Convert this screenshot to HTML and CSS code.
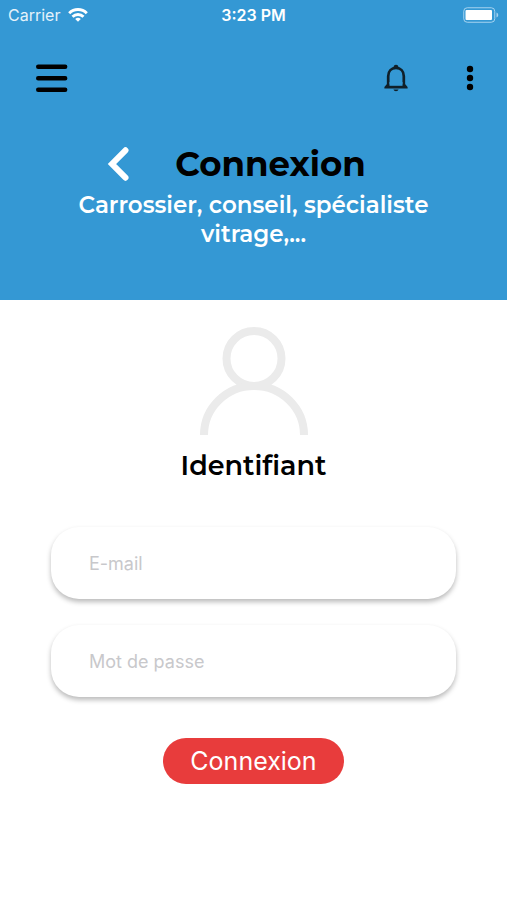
FILE: index.html
```html
<!DOCTYPE html>
<html lang="fr">
<head>
<meta charset="utf-8">
<meta name="viewport" content="width=device-width, initial-scale=1">
<title>Connexion</title>
<link rel="stylesheet" href="styles.css">
</head>
<body>
<header class="header">
  <div class="status">
    <div class="status-side">
      <span>Carrier</span>
      <svg width="20" height="14" viewBox="0 0 20 14" fill="none" stroke="#fff" stroke-width="2.9" aria-hidden="true">
        <path d="M1.2 5.2a12.4 12.4 0 0 1 17.6 0M4.5 8.7a7.8 7.8 0 0 1 11 0"/>
        <path d="M10 13.8 7.2 11a4 4 0 0 1 5.6 0z" fill="#fff" stroke="none"/>
      </svg>
    </div>
    <span class="status-time">3:23 PM</span>
    <div class="status-side status-end">
      <svg width="36" height="16" viewBox="0 0 36 16" aria-hidden="true">
        <rect x=".75" y=".75" width="31" height="14.5" rx="3.5" fill="none" stroke="#a5d2ef"/>
        <rect x="2.5" y="3" width="26.5" height="10" rx="1" fill="#fff"/>
        <path d="M33.5 5.500c2.300.8 2.300 4.200 0 5z" fill="#a5d2ef"/>
      </svg>
    </div>
  </div>
  <nav class="toolbar">
    <button class="icon-button" type="button" aria-label="Menu">
      <svg width="32" height="28" viewBox="0 0 32 28" stroke="#000" stroke-width="4.400" stroke-linecap="round"><path d="M2.200 2.700h27M2.200 14.200h27M2.200 25.700h27"/></svg>
    </button>
    <div class="toolbar-actions">
      <button class="icon-button" type="button" aria-label="Notifications">
        <svg width="24" height="28" viewBox="0 0 24 28" fill="none" stroke="#10202a" stroke-width="2.700">
          <path d="M4.200 22.600V12.200C4.200 7 7.500 3.900 12 3.900s7.800 3.100 7.800 8.300v10.400"/>
          <path d="M.4 24.400v-1.400l2.400-2.800h18.400l2.400 2.800v1.400z" fill="#10202a" stroke="none"/>
          <path d="M5.500 18h13v3.800h-13z" fill="#3498d4" stroke="none"/>
          <path d="M9.500 3.900a2.500 3.200 0 0 1 5 0zM9.400 25.400h5.200a2.700 2.500 0 0 1-5.200 0z" fill="#10202a" stroke="none"/>
        </svg>
      </button>
      <button class="icon-button" type="button" aria-label="Plus">
        <svg width="8" height="26" viewBox="0 0 8 26"><circle cx="4" cy="4" r="3.200"/><circle cx="4" cy="13" r="3.200"/><circle cx="4" cy="22" r="3.200"/></svg>
      </button>
    </div>
  </nav>
  <div class="title-row">
    <a class="back" href="#" aria-label="Retour">
      <svg width="22" height="34" viewBox="0 0 22 34" fill="none" stroke="#fff" stroke-width="6" stroke-linecap="round"><path d="M18.500 3.300 5 17l13.500 13.700"/></svg>
    </a>
    <h1>Connexion</h1>
  </div>
  <p class="subtitle">Carrossier, conseil, spécialiste vitrage,...</p>
</header>
<main class="login">
  <svg class="avatar" width="108" height="108" viewBox="0 0 108 108" fill="none" stroke="#ebebeb" stroke-width="8" aria-hidden="true">
    <circle cx="54" cy="31.500" r="27.500"/>
    <path d="M4 108A50 49 0 0 1 104 108"/>
  </svg>
  <h2>Identifiant</h2>
  <form class="form">
    <input class="field" type="email" placeholder="E-mail" aria-label="E-mail">
    <input class="field" type="password" placeholder="Mot de passe" aria-label="Mot de passe">
    <button class="submit" type="submit">Connexion</button>
  </form>
</main>
</body>
</html>
```
FILE: styles.css
```css
* {
  box-sizing: border-box;
}

body {
  margin: 0;
  background: #fff;
  color: #000;
  font-family: Inter, "Liberation Sans", sans-serif;
}

h1,
h2,
p {
  margin: 0;
  font-family: Montserrat, Inter, sans-serif;
  font-variant-ligatures: none;
}

button {
  padding: 0;
  border: 0;
  background: none;
  font-family: inherit;
}

svg {
  display: block;
}

.header {
  padding-bottom: 51px;
  background: #3498d4;
  color: #fff;
}

.status {
  display: flex;
  align-items: center;
  height: 30px;
  padding: 0 8px;
  font-size: 16px;
  line-height: 20px;
}

.status-side {
  display: flex;
  flex: 1;
  align-items: center;
  gap: 8px;
  color: #e4f2fb;
}

.status-end {
  justify-content: flex-end;
}

.status-time {
  font-weight: 600;
}

.toolbar {
  display: flex;
  align-items: center;
  justify-content: space-between;
  height: 96px;
  padding: 0 33px 0 36px;
}

.toolbar-actions {
  display: flex;
  align-items: center;
  gap: 58px;
}

.title-row {
  display: flex;
  align-items: center;
  justify-content: center;
  gap: 46px;
  padding: 18px 34px 7px 0;
}

h1 {
  color: #000;
  font-size: 34px;
  font-weight: 700;
  line-height: 40px;
}

.subtitle {
  max-width: 400px;
  margin: 0 auto;
  font-size: 23px;
  font-weight: 600;
  line-height: 29px;
  text-align: center;
}

.login {
  display: flex;
  flex-direction: column;
  align-items: center;
  padding: 27px 51px;
}

h2 {
  margin-top: 14px;
  font-size: 27px;
  font-weight: 600;
  line-height: 34px;
}

.form {
  display: flex;
  flex-direction: column;
  align-items: center;
  gap: 26px;
  width: 100%;
  margin-top: 44px;
}

.field {
  width: 100%;
  height: 72px;
  padding: 0 38px;
  border: 0;
  border-radius: 28px;
  background: #fff;
  box-shadow: 0 3px 5px rgba(0, 0, 0, 0.27);
  font-family: inherit;
  font-size: 18px;
}

.field::placeholder {
  color: #c8c8cb;
  opacity: 1;
}

.submit {
  height: 46px;
  margin-top: 15px;
  padding: 0 27px;
  border-radius: 23px;
  background: #e83c3c;
  color: #fff;
  font-size: 25px;
  line-height: 46px;
}
```
